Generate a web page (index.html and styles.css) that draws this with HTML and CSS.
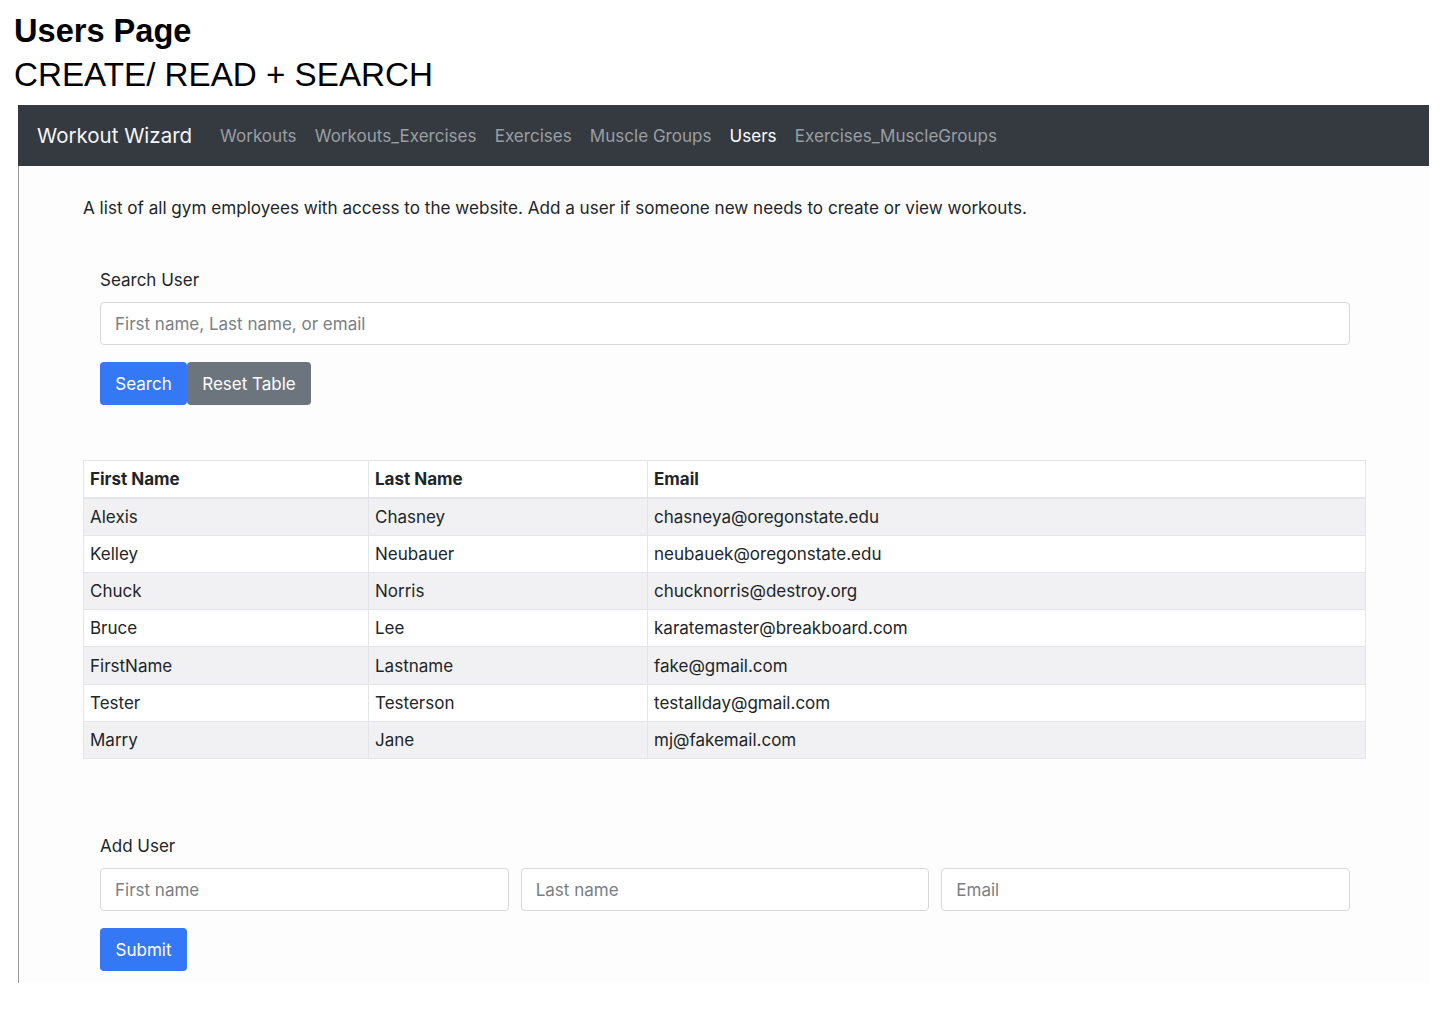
FILE: index.html
```html
<!DOCTYPE html>
<html>
<head>
<meta charset="utf-8">
<link rel="stylesheet" href="styles.css">
</head>
<body>
<header class="doc-head">
  <h1 class="doc-title">Users Page</h1>
  <h2 class="doc-sub">CREATE/ READ + SEARCH</h2>
</header>
<div class="shot">
  <nav class="navbar">
    <span class="brand">Workout Wizard</span>
    <a class="nav-link">Workouts</a>
    <a class="nav-link">Workouts_Exercises</a>
    <a class="nav-link">Exercises</a>
    <a class="nav-link">Muscle Groups</a>
    <a class="nav-link active">Users</a>
    <a class="nav-link">Exercises_MuscleGroups</a>
  </nav>
  <main class="content">
    <p class="intro">A list of all gym employees with access to the website. Add a user if someone new needs to create or view workouts.</p>
    <section class="form-block">
      <label class="label">Search User</label>
      <input class="input" type="text" placeholder="First name, Last name, or email">
      <div class="btn-row">
        <button class="btn btn-primary">Search</button><button class="btn btn-secondary">Reset Table</button>
      </div>
    </section>
    <table class="table">
      <thead>
        <tr><th class="c1">First Name</th><th class="c2">Last Name</th><th>Email</th></tr>
      </thead>
      <tbody>
        <tr><td>Alexis</td><td>Chasney</td><td>chasneya@oregonstate.edu</td></tr>
        <tr><td>Kelley</td><td>Neubauer</td><td>neubauek@oregonstate.edu</td></tr>
        <tr><td>Chuck</td><td>Norris</td><td>chucknorris@destroy.org</td></tr>
        <tr><td>Bruce</td><td>Lee</td><td>karatemaster@breakboard.com</td></tr>
        <tr><td>FirstName</td><td>Lastname</td><td>fake@gmail.com</td></tr>
        <tr><td>Tester</td><td>Testerson</td><td>testallday@gmail.com</td></tr>
        <tr><td>Marry</td><td>Jane</td><td>mj@fakemail.com</td></tr>
      </tbody>
    </table>
    <section class="form-block add">
      <label class="label">Add User</label>
      <div class="input-row">
        <input class="input" type="text" placeholder="First name">
        <input class="input" type="text" placeholder="Last name">
        <input class="input" type="text" placeholder="Email">
      </div>
      <div class="btn-row">
        <button class="btn btn-primary">Submit</button>
      </div>
    </section>
  </main>
</div>
</body>
</html>
```

FILE: styles.css
```css
* { box-sizing: border-box; }
body {
  margin: 0;
  background: #ffffff;
  font-family: "Liberation Sans", Arial, sans-serif;
  color: #000;
}
.doc-head { padding: 12px 0 0 14px; }
.doc-title {
  margin: 0;
  font-size: 32.6px;
  line-height: 38px;
  font-weight: bold;
}
.doc-sub {
  margin: 6px 0 0;
  font-size: 33.2px;
  line-height: 38px;
  font-weight: normal;
}
.shot {
  margin: 11px 15px 0 18px;
  width: 1411px;
  font-family: Inter, "Liberation Sans", sans-serif;
}
.navbar {
  height: 61px;
  background: #343a40;
  display: flex;
  align-items: center;
  padding-left: 19px;
}
.brand {
  color: #f4f5f6;
  font-size: 20.5px;
  margin-right: 28px;
}
.nav-link {
  color: #9a9ea3;
  font-size: 17.05px;
  margin-right: 18.2px;
}
.nav-link.active { color: #ffffff; }
.content {
  border-left: 1px solid #9a9a9a;
  background: #fdfdfd;
  padding: 29px 62px 12px 64px;
  color: #212529;
}
.intro {
  margin: 0;
  font-size: 17.1px;
  line-height: 25px;
}
.form-block { padding: 0 17px; margin-top: 48px; }
.label {
  display: block;
  font-size: 17px;
  line-height: 25px;
  margin-bottom: 9px;
}
.input {
  display: block;
  width: 100%;
  height: 43px;
  border: 1px solid #d6d9dc;
  border-radius: 4px;
  background: #fff;
  padding: 0 14px;
  font-family: inherit;
  font-size: 17px;
  color: #495057;
}
.input::placeholder { color: #7a8085; }
.btn-row { display: flex; margin-top: 17px; }
.btn {
  height: 43px;
  border: none;
  border-radius: 4px;
  color: #fff;
  font-family: inherit;
  font-size: 17px;
  padding: 0 15px;
}
.btn-primary { background: #3478f6; width: 87px; }
.btn-secondary { background: #6c757d; width: 124px; margin-left: 0; }
.table {
  margin-top: 55px;
  width: 1283px;
  border-collapse: collapse;
  font-size: 17px;
  border: 1px solid #e3e5e8;
}
.table th, .table td {
  text-align: left;
  padding: 0 6px;
  height: 37.3px;
  border: 1px solid #e3e5e8;
}
.table th { font-weight: bold; color: #212529; border-bottom: 2px solid #e3e5e8; background: #fff; }
.table .c1 { width: 285px; }
.table .c2 { width: 279px; }
.table tbody tr:nth-child(odd) td { background: #f1f1f3; }
.table tbody tr:nth-child(even) td { background: #fff; }
.add { margin-top: 75px; }
.input-row { display: flex; gap: 12px; }
.input-row .input { flex: 1; }
```
